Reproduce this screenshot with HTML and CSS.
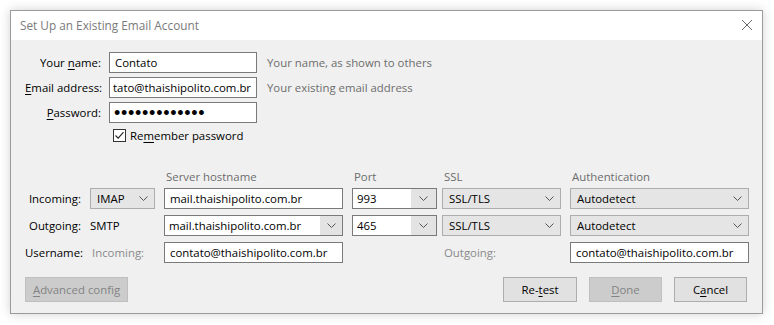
FILE: index.html
```html
<!DOCTYPE html>
<html>
<head>
<meta charset="utf-8">
<link rel="stylesheet" href="styles.css">
</head>
<body>
<div class="dialog">
  <div class="titlebar">
    <span class="title">Set Up an Existing Email Account</span>
    <svg class="close" width="12" height="12" viewBox="0 0 12 12"><path d="M1 1 L11 11 M11 1 L1 11" stroke="#6b6b6b" stroke-width="1" fill="none"/></svg>
  </div>
  <div class="content">
    <div class="identity">
      <span class="lbl">Your <u>n</u>ame:</span>
      <div class="field">Contato</div>
      <span class="hint">Your name, as shown to others</span>

      <span class="lbl"><u>E</u>mail address:</span>
      <div class="field scrolled">tato@thaishipolito.com.br</div>
      <span class="hint">Your existing email address</span>

      <span class="lbl"><u>P</u>assword:</span>
      <div class="field"><span class="dots">•••••••••••••</span></div>
      <span></span>

      <span></span>
      <label class="check">
        <svg width="13" height="13" viewBox="0 0 13 13"><rect x="0.5" y="0.5" width="12" height="12" fill="#fff" stroke="#333"/><path d="M2.5 6.5 L5.2 9.2 L10.5 3.2" stroke="#222" stroke-width="1.1" fill="none"/></svg>
        <span>Re<u>m</u>ember password</span>
      </label>
      <span></span>
    </div>

    <div class="server">
      <span></span><span></span>
      <span class="colhead">Server hostname</span>
      <span class="colhead">Port</span>
      <span class="colhead">SSL</span>
      <span class="colhead">Authentication</span>

      <span class="rowlbl">Incoming:</span>
      <div class="select proto">IMAP<svg class="chev" width="9" height="5" viewBox="0 0 9 5"><path d="M0.5 0.5 L4.5 4.5 L8.5 0.5" stroke="#555" fill="none"/></svg></div>
      <div class="field host">mail.thaishipolito.com.br</div>
      <div class="combo port"><span class="val">993</span><span class="drop"><svg width="9" height="5" viewBox="0 0 9 5"><path d="M0.5 0.5 L4.5 4.5 L8.5 0.5" stroke="#555" fill="none"/></svg></span></div>
      <div class="select ssl">SSL/TLS<svg class="chev" width="9" height="5" viewBox="0 0 9 5"><path d="M0.5 0.5 L4.5 4.5 L8.5 0.5" stroke="#555" fill="none"/></svg></div>
      <div class="select auth">Autodetect<svg class="chev" width="9" height="5" viewBox="0 0 9 5"><path d="M0.5 0.5 L4.5 4.5 L8.5 0.5" stroke="#555" fill="none"/></svg></div>

      <span class="rowlbl">Outgoing:</span>
      <span class="plain">SMTP</span>
      <div class="combo host"><span class="val">mail.thaishipolito.com.br</span><span class="drop"><svg width="9" height="5" viewBox="0 0 9 5"><path d="M0.5 0.5 L4.5 4.5 L8.5 0.5" stroke="#555" fill="none"/></svg></span></div>
      <div class="combo port"><span class="val">465</span><span class="drop"><svg width="9" height="5" viewBox="0 0 9 5"><path d="M0.5 0.5 L4.5 4.5 L8.5 0.5" stroke="#555" fill="none"/></svg></span></div>
      <div class="select ssl">SSL/TLS<svg class="chev" width="9" height="5" viewBox="0 0 9 5"><path d="M0.5 0.5 L4.5 4.5 L8.5 0.5" stroke="#555" fill="none"/></svg></div>
      <div class="select auth">Autodetect<svg class="chev" width="9" height="5" viewBox="0 0 9 5"><path d="M0.5 0.5 L4.5 4.5 L8.5 0.5" stroke="#555" fill="none"/></svg></div>

      <span class="rowlbl">Username:</span>
      <span class="plain muted">Incoming:</span>
      <div class="field host">contato@thaishipolito.com.br</div>
      <span></span>
      <span class="plain muted">Outgoing:</span>
      <div class="field auth">contato@thaishipolito.com.br</div>
    </div>

    <div class="actions">
      <button class="btn disabled adv"><u>A</u>dvanced config</button>
      <span class="spacer"></span>
      <button class="btn retest">Re-<u>t</u>est</button>
      <button class="btn disabled done"><u>D</u>one</button>
      <button class="btn cancel">C<u>a</u>ncel</button>
    </div>
  </div>
</div>
</body>
</html>
```

FILE: styles.css
```css
* { box-sizing: border-box; }
html, body { margin: 0; padding: 0; background: #ffffff; }
body {
  font-family: "Open Sans", "Noto Sans", sans-serif;
  font-size: 11.4px;
  color: #000;
  padding: 10px;
}
u { text-decoration: underline; text-underline-offset: 2px; }

.dialog {
  width: 753px;
  height: 304px;
  border: 1px solid #9b9b9b;
  background: #f0f0f0;
  box-shadow: 0 0 10px rgba(0,0,0,0.18);
  display: flex;
  flex-direction: column;
}
.titlebar {
  height: 29px;
  background: #fff;
  display: flex;
  align-items: center;
  justify-content: space-between;
  padding: 0 9px 2px 9px;
}
.title { color: #7a7a7a; font-size: 11.8px; }

.content {
  padding: 12px 13px 0 14px;
  display: flex;
  flex-direction: column;
}

/* identity section */
.identity {
  display: grid;
  grid-template-columns: 76px 148px 1fr;
  grid-auto-rows: 21px;
  row-gap: 4px;
  column-gap: 8px;
  align-items: center;
}
.identity > :nth-child(3n) { margin-left: 2px; }
.lbl { text-align: right; white-space: nowrap; }
.hint { color: #6d6d6d; }
.field {
  height: 21px;
  border: 1px solid #7a7a7a;
  background: #fff;
  padding: 0 5px;
  display: flex;
  align-items: center;
  white-space: nowrap;
  overflow: hidden;
}
.field.scrolled { padding: 0 3px; }
.dots {
  font-family: "Liberation Sans", sans-serif;
  font-size: 18px;
  line-height: 1;
  letter-spacing: 0.72px;
  margin-left: -1px;
}
.check {
  display: flex;
  align-items: center;
  gap: 4px;
  margin-left: 4px;
  height: 16px;
  align-self: start;
}

/* server section */
.server {
  margin-top: 22px;
  display: grid;
  grid-template-columns: 65px 74px 188px 90px 128px 179px;
  grid-template-rows: 12px 21px 21px 21px;
  row-gap: 6px;
  align-items: center;
}
.colhead { color: #6d6d6d; padding-left: 2px; white-space: nowrap; }
.rowlbl { text-align: right; padding-right: 9px; white-space: nowrap; }
.muted { color: #8a8a8a; padding-left: 2px; }

.select {
  position: relative;
  height: 21px;
  border: 1px solid #adadad;
  background: #e5e5e5;
  display: flex;
  align-items: center;
  padding-left: 6px;
}
.select .chev { position: absolute; right: 6px; top: 7px; }
.proto { width: 65px; }
.host { width: 179px; }
.port { width: 85px; }
.ssl { width: 119px; }
.auth { width: 179px; }

.combo {
  height: 21px;
  border: 1px solid #7a7a7a;
  background: #fff;
  display: flex;
  align-items: stretch;
}
.combo .val { flex: 1; display: flex; align-items: center; padding-left: 4px; white-space: nowrap; overflow: hidden; }
.combo .drop {
  background: #e3e3e3;
  display: flex;
  align-items: center;
  justify-content: center;
}
.combo.host .drop { width: 22px; }
.combo.port .drop { width: 25px; }

/* actions */
.actions {
  margin-top: 14px;
  display: flex;
  gap: 12px;
  padding-right: 2px;
}
.spacer { flex: 1; }
.btn {
  font: inherit;
  color: #000;
  height: 25px;
  border: 1px solid #adadad;
  background: #e1e1e1;
  padding: 0;
}
.btn.disabled { background: #cccccc; border-color: #bfbfbf; color: #838383; }
.adv { width: 103px; }
.retest { width: 74px; }
.done { width: 73px; }
.cancel { width: 73px; }
```
